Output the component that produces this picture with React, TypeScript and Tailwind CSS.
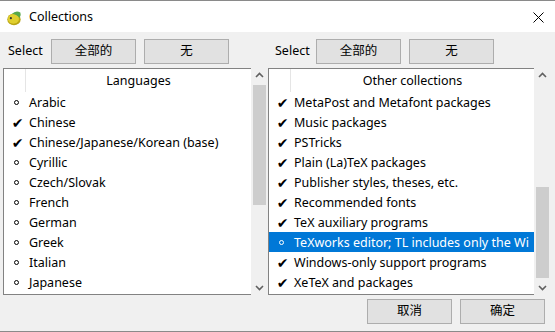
import React from "react";

type Item = { label: string; checked: boolean; selected?: boolean };

const languages: Item[] = [
  { label: "Arabic", checked: false },
  { label: "Chinese", checked: true },
  { label: "Chinese/Japanese/Korean (base)", checked: true },
  { label: "Cyrillic", checked: false },
  { label: "Czech/Slovak", checked: false },
  { label: "French", checked: false },
  { label: "German", checked: false },
  { label: "Greek", checked: false },
  { label: "Italian", checked: false },
  { label: "Japanese", checked: false },
];

const others: Item[] = [
  { label: "MetaPost and Metafont packages", checked: true },
  { label: "Music packages", checked: true },
  { label: "PSTricks", checked: true },
  { label: "Plain (La)TeX packages", checked: true },
  { label: "Publisher styles, theses, etc.", checked: true },
  { label: "Recommended fonts", checked: true },
  { label: "TeX auxiliary programs", checked: true },
  { label: "TeXworks editor; TL includes only the Wi", checked: false, selected: true },
  { label: "Windows-only support programs", checked: true },
  { label: "XeTeX and packages", checked: true },
];

const font = { fontFamily: '"Noto Sans", "Noto Sans CJK SC", sans-serif' };

const Button = ({ label, className = "" }: { label: string; className?: string }) => (
  <button
    className={
      "h-[25px] w-[85px] bg-[#e1e1e1] border border-[#adadad] text-[12.5px] text-black flex items-center justify-center " +
      className
    }
  >
    {label}
  </button>
);

const Chevron = ({ up }: { up: boolean }) => (
  <svg width="9" height="6" viewBox="0 0 9 6" className="block">
    <polyline
      points={up ? "1,5 4.5,1.5 8,5" : "1,1 4.5,4.5 8,1"}
      fill="none"
      stroke="#606060"
      strokeWidth="1.6"
    />
  </svg>
);

const ScrollBar = ({ thumbTop, thumbHeight }: { thumbTop: number; thumbHeight: number }) => (
  <div className="relative w-[17px] h-full bg-[#f0f0f0] shrink-0">
    <div className="absolute top-[4px] left-0 right-0 flex justify-center">
      <Chevron up />
    </div>
    <div
      className="absolute left-[2px] right-[2px] bg-[#cdcdcd]"
      style={{ top: thumbTop, height: thumbHeight }}
    />
    <div className="absolute bottom-[4px] left-0 right-0 flex justify-center">
      <Chevron up={false} />
    </div>
  </div>
);

const Row = ({ item }: { item: Item }) => (
  <div
    className={
      "h-[20px] flex items-center whitespace-nowrap overflow-hidden " +
      (item.selected ? "bg-[#0078d7] text-white" : "text-black")
    }
  >
    <span className="w-[25px] shrink-0 flex items-center justify-center pt-[1px]">
      {item.checked ? (
        <span className="text-[14px] leading-none pl-[2px] font-bold" style={{ fontFamily: '"DejaVu Sans", sans-serif' }}>
          ✔
        </span>
      ) : (
        <span
          className={
            "w-[5px] h-[5px] rounded-full border " +
            (item.selected ? "border-white" : "border-black")
          }
        />
      )}
    </span>
    <span className="text-[12.5px] pt-[2px]">{item.label}</span>
  </div>
);

const ListBox = ({
  title,
  items,
  thumbTop,
  thumbHeight,
  firstCol,
}: {
  title: string;
  items: Item[];
  thumbTop: number;
  thumbHeight: number;
  firstCol: number;
}) => (
  <div className="flex h-[227px]">
    <div className="flex-1 min-w-0 bg-white border-l border-t border-b border-[#828282] overflow-hidden">
      <div className="h-[23px] flex">
        <div className="border-r border-[#e5e5e5] shrink-0" style={{ width: firstCol }} />
        <div className="flex-1 flex items-center justify-center text-[12.5px] text-black pt-[2px]">{title}</div>
      </div>
      {items.map((it) => (
        <Row key={it.label} item={it} />
      ))}
    </div>
    <ScrollBar thumbTop={thumbTop} thumbHeight={thumbHeight} />
  </div>
);

const DuckIcon = () => (
  <svg width="17" height="17" viewBox="0 0 16 16">
    <ellipse cx="7.5" cy="9.8" rx="6.3" ry="5.5" fill="#b9a514" />
    <ellipse cx="7" cy="9.3" rx="5.2" ry="4.6" fill="#e0cf2e" />
    <path d="M5.5 4.8 Q9 1 13.5 3.2 Q14.6 6 12.8 8.5 Q10 5 5.5 4.8Z" fill="#58a848" />
    <circle cx="4.6" cy="8.6" r="1" fill="#333" />
  </svg>
);

export default function App() {
  return (
    <div
      className="w-[555px] h-[332px] bg-[#f0f0f0] border-t border-b border-[#8a8a8a] flex flex-col overflow-hidden"
      style={font}
    >
      <div className="h-[31px] bg-white flex items-center shrink-0 pt-[1px]">
        <div className="pl-[6px] pr-[6px]">
          <DuckIcon />
        </div>
        <span className="text-[12.5px] text-black pt-[1px]">Collections</span>
        <div className="ml-auto mr-[11px]">
          <svg width="11" height="11" viewBox="0 0 11 11">
            <path d="M0.5 0.5 L10.5 10.5 M10.5 0.5 L0.5 10.5" stroke="#000" strokeWidth="1" />
          </svg>
        </div>
      </div>

      <div className="flex pl-[3px] pt-[7px]">
        <div className="w-[265px] flex flex-col">
          <div className="flex items-center h-[25px] mb-[4px]">
            <span className="text-[12.5px] text-black w-[48px] pl-[5px]">Select</span>
            <Button label="全部的" />
            <Button label="无" className="ml-[8px]" />
          </div>
          <ListBox title="Languages" items={languages} thumbTop={17} thumbHeight={120} firstCol={22} />
        </div>
        <div className="w-[283px] flex flex-col">
          <div className="flex items-center h-[25px] mb-[4px]">
            <span className="text-[12.5px] text-black w-[48px] pl-[7px]">Select</span>
            <Button label="全部的" />
            <Button label="无" className="ml-[8px]" />
          </div>
          <ListBox title="Other collections" items={others} thumbTop={119} thumbHeight={91} firstCol={22} />
        </div>
      </div>

      <div className="flex justify-end gap-[8px] pr-[10px] pt-[4px]">
        <Button label="取消" />
        <Button label="确定" />
      </div>
    </div>
  );
}
